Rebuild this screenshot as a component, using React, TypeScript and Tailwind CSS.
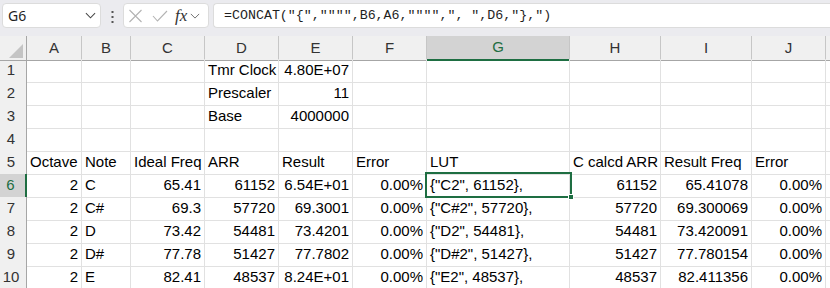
import React from "react";

// 열 너비 (오른쪽 테두리 1px 포함)
const cols = ["A", "B", "C", "D", "E", "F", "G", "H", "I", "J"];

type Cell = { v: string; r?: boolean };

// 행 데이터: 각 행은 A..J 순서
const rows: (Cell | null)[][] = [
  [null, null, null, { v: "Tmr Clock" }, { v: "4.80E+07", r: true }, null, null, null, null, null],
  [null, null, null, { v: "Prescaler" }, { v: "11", r: true }, null, null, null, null, null],
  [null, null, null, { v: "Base" }, { v: "4000000", r: true }, null, null, null, null, null],
  [null, null, null, null, null, null, null, null, null, null],
  [
    { v: "Octave" }, { v: "Note" }, { v: "Ideal Freq" }, { v: "ARR" }, { v: "Result" },
    { v: "Error" }, { v: "LUT" }, { v: "C calcd ARR" }, { v: "Result Freq" }, { v: "Error" },
  ],
  [
    { v: "2", r: true }, { v: "C" }, { v: "65.41", r: true }, { v: "61152", r: true }, { v: "6.54E+01", r: true },
    { v: "0.00%", r: true }, { v: '{"C2", 61152},' }, { v: "61152", r: true }, { v: "65.41078", r: true }, { v: "0.00%", r: true },
  ],
  [
    { v: "2", r: true }, { v: "C#" }, { v: "69.3", r: true }, { v: "57720", r: true }, { v: "69.3001", r: true },
    { v: "0.00%", r: true }, { v: '{"C#2", 57720},' }, { v: "57720", r: true }, { v: "69.300069", r: true }, { v: "0.00%", r: true },
  ],
  [
    { v: "2", r: true }, { v: "D" }, { v: "73.42", r: true }, { v: "54481", r: true }, { v: "73.4201", r: true },
    { v: "0.00%", r: true }, { v: '{"D2", 54481},' }, { v: "54481", r: true }, { v: "73.420091", r: true }, { v: "0.00%", r: true },
  ],
  [
    { v: "2", r: true }, { v: "D#" }, { v: "77.78", r: true }, { v: "51427", r: true }, { v: "77.7802", r: true },
    { v: "0.00%", r: true }, { v: '{"D#2", 51427},' }, { v: "51427", r: true }, { v: "77.780154", r: true }, { v: "0.00%", r: true },
  ],
  [
    { v: "2", r: true }, { v: "E" }, { v: "82.41", r: true }, { v: "48537", r: true }, { v: "8.24E+01", r: true },
    { v: "0.00%", r: true }, { v: '{"E2", 48537},' }, { v: "48537", r: true }, { v: "82.411356", r: true }, { v: "0.00%", r: true },
  ],
];

const gridCols =
  "grid grid-cols-[27px_55px_49px_74px_74px_74px_74px_143px_91px_91px_74px_1fr]";

function Chevron({ className }: { className?: string }) {
  return (
    <svg viewBox="0 0 12 7" className={className} fill="none" stroke="currentColor" strokeWidth="1.1">
      <path d="M1 1l5 5 5-5" />
    </svg>
  );
}

function FormulaBar() {
  return (
    <div className="flex h-[36px] items-start gap-0 bg-[#ebebef] pt-[3px] pl-[2px]">
      {/* 이름 상자 */}
      <div className="flex h-[25px] w-[99px] items-center justify-between rounded-[4px] border border-[#dcdcdc] bg-white pl-[5px] pr-[4px]">
        <span className="text-[14px] text-[#1f1f1f] [font-family:'Noto_Sans',sans-serif]">G6</span>
        <Chevron className="h-[7px] w-[11px] text-[#444]" />
      </div>
      {/* 세로 점 세 개 */}
      <div className="flex w-[22px] justify-center pt-[8px]">
        <svg width="3" height="12" viewBox="0 0 3 12" fill="#555">
          <rect x="0.5" y="0" width="2" height="2" />
          <rect x="0.5" y="5" width="2" height="2" />
          <rect x="0.5" y="10" width="2" height="2" />
        </svg>
      </div>
      {/* 취소 / 확인 / fx */}
      <div className="flex h-[25px] w-[86px] items-center rounded-[4px] border border-[#dcdcdc] bg-white pl-[4px]">
        <svg width="15" height="14" viewBox="0 0 15 14" fill="none" stroke="#b3b3b3" strokeWidth="1.1">
          <path d="M1.5 1l12 12M13.5 1l-12 12" />
        </svg>
        <svg width="16" height="12" viewBox="0 0 16 12" fill="none" stroke="#b3b3b3" strokeWidth="1.1" className="ml-[9px]">
          <path d="M1 6l4.5 5L15 1" />
        </svg>
        <span className="ml-[7px] text-[17px] italic leading-none text-[#333] [font-family:'Liberation_Serif',serif]">fx</span>
        <Chevron className="ml-[3px] h-[6px] w-[10px] text-[#666]" />
      </div>
      {/* 수식 입력줄 */}
      <div className="ml-[4px] flex h-[25px] flex-1 items-center rounded-l-[4px] border border-r-0 border-[#dcdcdc] bg-white pl-[10px]">
        <span className="whitespace-pre text-[13.3px] text-[#1f1f1f] [font-family:'Liberation_Mono',monospace]">
          {'=CONCAT("{","""",B6,A6,"""",", ",D6,"},")'}
        </span>
      </div>
    </div>
  );
}

export default function App() {
  return (
    <div className="h-[288px] w-[830px] overflow-hidden bg-white [font-family:'Liberation_Sans',Arial,sans-serif]">
      <FormulaBar />

      {/* 열 머리글 */}
      <div className={`${gridCols} h-[23px] text-[15px] text-[#333]`}>
        <div className="relative border-r border-b border-[#a6a6a6] bg-[#f0f0f0]">
          <svg width="14" height="14" viewBox="0 0 14 14" className="absolute bottom-[2px] right-[3px]">
            <path d="M14 0V14H0Z" fill="#c4c4c4" />
          </svg>
        </div>
        {cols.map((c) =>
          c === "G" ? (
            <div
              key={c}
              className="flex items-center justify-center border-r border-b-2 border-r-[#c6c6c6] border-b-[#1e6e42] bg-[#d3d3d3] text-[#1e6e42]"
            >
              {c}
            </div>
          ) : (
            <div
              key={c}
              className="flex items-center justify-center border-r border-b border-r-[#c6c6c6] border-b-[#a6a6a6] bg-[#f0f0f0]"
            >
              {c}
            </div>
          ),
        )}
        <div className="border-b border-[#a6a6a6] bg-[#f0f0f0]" />
      </div>

      {/* 본문 행 */}
      {rows.map((row, ri) => {
        const n = ri + 1;
        const sel = n === 6;
        return (
          <div key={n} className={`${gridCols} h-[23px] text-[15px] text-black`}>
            <div
              className={
                sel
                  ? "flex items-center justify-center border-r-2 border-b border-r-[#1e6e42] border-b-[#d4d4d4] bg-[#d3d3d3] pr-[4px] text-[#1e6e42]"
                  : "flex items-center justify-center border-r border-b border-r-[#a6a6a6] border-b-[#d4d4d4] bg-[#f0f0f0] pr-[4px] text-[#333]"
              }
            >
              {n}
            </div>
            {row.map((cell, ci) => (
              <div
                key={ci}
                className={`relative flex items-center whitespace-nowrap border-r border-b border-[#e1e1e1] px-[3px] ${
                  cell?.r ? "justify-end" : "justify-start"
                }`}
              >
                {cell?.v}
                {sel && ci === 6 && (
                  <div className="absolute -left-[2px] -top-[2px] z-10 h-[26px] w-[147px] border-2 border-[#1e6e42]">
                    <div className="absolute -bottom-[4px] -right-[4px] h-[6px] w-[6px] border border-white bg-[#1e6e42]" />
                  </div>
                )}
              </div>
            ))}
            <div className="border-b border-[#e1e1e1]" />
          </div>
        );
      })}
    </div>
  );
}
